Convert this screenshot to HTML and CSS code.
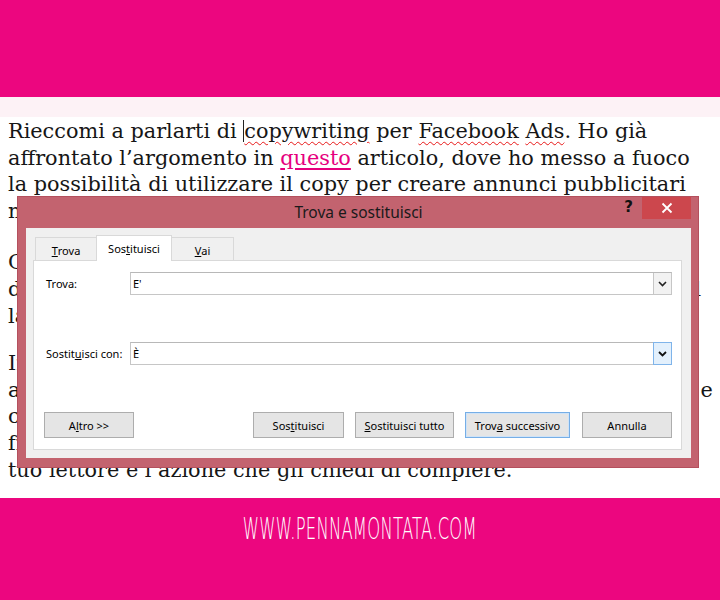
FILE: index.html
```html
<!DOCTYPE html>
<html lang="it">
<head>
<meta charset="utf-8">
<title>Trova e sostituisci</title>
<link rel="stylesheet" href="styles.css">
</head>
<body>
<div class="page">
  <header class="topband"></header>
  <div class="strip"></div>
  <main class="article">
    <p class="para">
      <span class="line">Rieccomi a parlarti di <span class="caret"></span><span class="typo">copywriting</span> per <span class="typo">Facebook</span> <span class="typo">Ads</span>. Ho già</span>
      <span class="line">affrontato l’argomento in <a class="link" href="#">questo</a> articolo, dove ho messo a fuoco</span>
      <span class="line">la possibilità di utilizzare il copy per creare annunci pubblicitari</span>
      <span class="line">mirati ed efficaci.</span>
    </p>
    <p class="para first-gap">
      <span class="line">Come promesso, oggi voglio soffermarmi su un altro aspetto</span>
      <span class="line">della scrittura persuasiva: il rapporto tra testo e immagini, ed è il</span>
      <span class="line">la chiave per catturare l’attenzione.</span>
    </p>
    <p class="para">
      <span class="line">In questo post ti darò qualche consiglio pratico per scrivere</span>
      <span class="line">annunci che convertono, partendo da un concetto semplice: frasi e</span>
      <span class="line">concetti che usi devono essere chiari, diretti e coerenti,</span>
      <span class="line">fra il messaggio che vuoi trasmettere e il risultato c’è il</span>
      <span class="line">tuo lettore e l’azione che gli chiedi di compiere.</span>
    </p>
  </main>
  <footer class="bottomband">
    <span class="brand">WWW.PENNAMONTATA.COM</span>
  </footer>

  <div class="dialog">
    <div class="titlebar">
      <span class="title">Trova e sostituisci</span>
      <span class="help">?</span>
      <span class="close">
        <svg width="12" height="12" viewBox="0 0 12 12"><path d="M1.5 1.5 L10.5 10.5 M10.5 1.5 L1.5 10.5" stroke="#fff" stroke-width="1.8" fill="none"/></svg>
      </span>
    </div>
    <div class="client">
      <div class="tabs">
        <span class="tab"><u>T</u>rova</span>
        <span class="tab active">Sos<u>t</u>ituisci</span>
        <span class="tab"><u>V</u>ai</span>
      </div>
      <div class="panel">
        <div class="row">
          <span class="label">Trova:</span>
          <div class="combo">
            <span class="value">E'</span>
            <span class="drop">
              <svg width="9" height="6" viewBox="0 0 9 6"><path d="M1 1 L4.5 4.5 L8 1" stroke="#222" stroke-width="1.6" fill="none"/></svg>
            </span>
          </div>
        </div>
        <div class="row">
          <span class="label">Sostit<u>u</u>isci con:</span>
          <div class="combo">
            <span class="value">È</span>
            <span class="drop hot">
              <svg width="9" height="6" viewBox="0 0 9 6"><path d="M1 1 L4.5 4.5 L8 1" stroke="#111" stroke-width="1.8" fill="none"/></svg>
            </span>
          </div>
        </div>
        <div class="buttons">
          <button class="btn w90">A<u>l</u>tro &gt;&gt;</button>
          <span class="spacer"></span>
          <button class="btn w91">Sos<u>t</u>ituisci</button>
          <button class="btn w99"><u>S</u>ostituisci tutto</button>
          <button class="btn w105 default">Trov<u>a</u> successivo</button>
          <button class="btn w90 last">Annulla</button>
        </div>
      </div>
    </div>
  </div>
</div>
</body>
</html>
```
FILE: styles.css
```css
html, body {
  margin: 0;
  padding: 0;
  background: #ffffff;
}
.page {
  position: relative;
  width: 720px;
  height: 600px;
  overflow: hidden;
  display: flex;
  flex-direction: column;
}
.topband {
  height: 97px;
  background: #ec067f;
  flex: none;
}
.strip {
  height: 20px;
  background: #fdf2f6;
  flex: none;
}
.article {
  flex: 1;
  padding: 1px 0 0 8px;
  font-family: "DejaVu Serif", "Liberation Serif", serif;
  font-size: 20.8px;
  line-height: 26.6px;
  color: #161616;
  overflow: hidden;
}
.para {
  margin: 0 0 25px 0;
}
.para.first-gap {
  margin-bottom: 21px;
}
.line {
  display: block;
  white-space: nowrap;
}
.caret {
  display: inline-block;
  width: 1px;
  height: 22px;
  background: #222;
  vertical-align: -4px;
}
.typo {
  text-decoration: underline wavy #e81818;
  text-decoration-thickness: 1px;
  text-underline-offset: 3px;
}
.link {
  color: #e6007e;
  text-decoration: underline;
  text-underline-offset: 3px;
}
.bottomband {
  height: 102px;
  flex: none;
  background: #ec067f;
  display: flex;
  justify-content: center;
  padding-top: 15px;
  box-sizing: border-box;
}
.brand {
  font-family: "DejaVu Sans", sans-serif;
  font-weight: 300;
  font-size: 31px;
  line-height: 31px;
  color: #ffffff;
  letter-spacing: 0.4px;
  height: 31px;
  display: inline-block;
  transform: scaleX(0.53);
}

/* dialog */
.dialog {
  position: absolute;
  left: 18px;
  top: 197px;
  width: 680px;
  height: 270px;
  box-sizing: border-box;
  background: #c3636f;
  padding: 0 7px 9px 8px;
  display: flex;
  flex-direction: column;
  font-family: "Noto Sans", "Open Sans", sans-serif;
  font-size: 11px;
  color: #000;
  box-shadow: 0 0 0 1px #b4505d;
}
.titlebar {
  height: 31px;
  flex: none;
  position: relative;
  display: flex;
  justify-content: center;
  align-items: center;
}
.title {
  font-size: 15.5px;
  color: #1a1a1a;
  padding-bottom: 1px;
}
.help {
  position: absolute;
  right: 58px;
  top: 1px;
  font-family: "DejaVu Sans", sans-serif;
  font-weight: bold;
  font-size: 15px;
  color: #111;
}
.close {
  position: absolute;
  right: 0;
  top: 0;
  width: 49px;
  height: 22px;
  background: #cc474d;
  display: flex;
  justify-content: center;
  align-items: center;
}
.client {
  flex: 1;
  background: #f0f0f0;
  padding: 9px 9px 8px 7px;
  display: flex;
  flex-direction: column;
}
.tabs {
  display: flex;
  padding-left: 2px;
  height: 23px;
  align-items: flex-end;
  position: relative;
  z-index: 1;
}
.tab {
  box-sizing: border-box;
  height: 23px;
  border: 1px solid #d9d9d9;
  border-bottom: none;
  background: #f0f0f0;
  display: flex;
  align-items: center;
  justify-content: center;
  padding-top: 3px;
}
.tab:nth-child(1) { width: 62px; }
.tab:nth-child(3) { width: 63px; margin-left: -1px; }
.tab.active {
  width: 76px;
  height: 26px;
  margin-left: -1px;
  margin-bottom: -1px;
  background: #fff;
  padding-top: 0;
  padding-bottom: 1px;
}
.panel {
  flex: 1;
  background: #fff;
  border: 1px solid #d9d9d9;
  padding: 11px 9px 10px 10px;
  display: flex;
  flex-direction: column;
  gap: 47px;
}
.row {
  display: flex;
  align-items: center;
  height: 23px;
}
.label {
  width: 84px;
  padding-left: 2px;
  flex: none;
}
.combo {
  flex: 1;
  height: 23px;
  box-sizing: border-box;
  border: 1px solid #c6c6c6;
  border-top-color: #b8b8b8;
  display: flex;
  align-items: center;
}
.value {
  flex: 1;
  padding-left: 2px;
}
.drop {
  width: 18px;
  height: 21px;
  box-sizing: border-box;
  border-left: 1px solid #c6c6c6;
  background: #f2f2f2;
  display: flex;
  align-items: center;
  justify-content: center;
}
.drop.hot {
  background: #e3f0fc;
  border: 1px solid #7fb4ea;
  height: 23px;
  width: 19px;
  margin-right: -1px;
}
.buttons {
  display: flex;
  height: 26px;
  gap: 11px;
}
.spacer {
  flex: 1;
}
.btn {
  box-sizing: border-box;
  height: 26px;
  border: 1px solid #adadad;
  background: #e5e5e5;
  font-family: "Noto Sans", "Open Sans", sans-serif;
  font-size: 11px;
  color: #000;
  padding: 0;
  margin: 0;
}
.w90 { width: 90px; }
.w91 { width: 91px; }
.w99 { width: 99px; }
.w105 { width: 105px; }
.btn.default {
  border-color: #76aee6;
  box-shadow: inset 0 0 0 1px #cfe3f7;
}
.btn.last { margin-left: 1px; }
u {
  text-underline-offset: 1px;
}
```
